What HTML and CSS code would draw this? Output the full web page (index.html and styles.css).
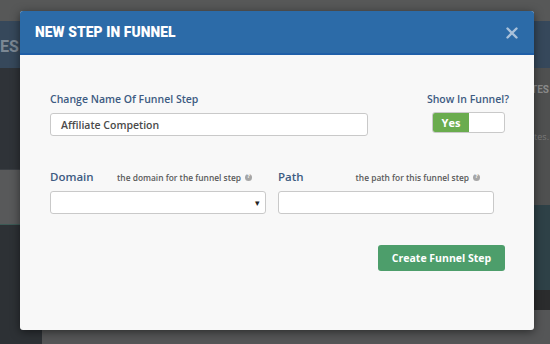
FILE: index.html
```html
<!DOCTYPE html>
<html>
<head>
<meta charset="utf-8">
<link rel="stylesheet" href="styles.css">
</head>
<body>
<div class="backdrop">
  <div class="bd-top"></div>
  <div class="bd-band"><span class="bd-title">ES F</span></div>
  <div class="bd-main">
    <div class="bd-side">
      <div class="bs-a"></div>
      <div class="bs-b"></div>
      <div class="bs-c"></div>
    </div>
    <div class="bd-content">
      <div class="bc-a">
        <span class="bc-head">TES</span>
        <span class="bc-txt">tes.</span>
      </div>
      <div class="bc-b"></div>
      <div class="bc-c"></div>
      <div class="bc-d"><div class="bar bar1"></div><div class="bar bar2"></div></div>
    </div>
  </div>
</div>

<div class="modal">
  <div class="modal-header">
    <h1 class="modal-title">NEW STEP IN FUNNEL</h1>
    <svg class="close" width="12" height="12" viewBox="0 0 12 12"><path d="M1.5 1.5 L10.5 10.5 M10.5 1.5 L1.5 10.5" stroke="#a9c1da" stroke-width="2.4" stroke-linecap="round"/></svg>
  </div>
  <div class="modal-body">
    <div class="row row-name">
      <div class="field name-field">
        <label class="label">Change Name Of Funnel Step</label>
        <div class="input"><span class="input-text">Affiliate Competion</span></div>
      </div>
      <div class="field show-field">
        <label class="label label-show">Show In Funnel?</label>
        <div class="toggle"><span class="toggle-on">Yes</span><span class="toggle-off"></span></div>
      </div>
    </div>
    <div class="row row-url">
      <div class="field url-field">
        <div class="label-row">
          <label class="label label-big">Domain</label>
          <span class="help">the domain for the funnel step <span class="qicon">?</span></span>
        </div>
        <div class="input select"><span class="caret">&#9662;</span></div>
      </div>
      <div class="field url-field">
        <div class="label-row">
          <label class="label label-big">Path</label>
          <span class="help">the path for this funnel step <span class="qicon">?</span></span>
        </div>
        <div class="input"></div>
      </div>
    </div>
    <div class="actions">
      <button class="btn">Create Funnel Step</button>
    </div>
  </div>
</div>
</body>
</html>
```

FILE: styles.css
```css
html, body {
  margin: 0;
  padding: 0;
}
body {
  width: 550px;
  height: 344px;
  overflow: hidden;
  position: relative;
  background: #2e3236;
  font-family: "Open Sans", "Noto Sans", sans-serif;
}

/* backdrop page */
.backdrop {
  width: 550px;
  height: 344px;
  display: flex;
  flex-direction: column;
}
.bd-top {
  height: 21px;
  background: #575858;
}
.bd-band {
  height: 47px;
  background: #36485b;
  display: flex;
  align-items: center;
  font-family: "Roboto", sans-serif;
  font-weight: 700;
  color: #7c8894;
}
.bd-title {
  font-size: 16px;
  margin-top: 3px;
}
.bd-main {
  flex: 1;
  display: flex;
}
.bd-side {
  width: 42px;
  display: flex;
  flex-direction: column;
}
.bs-a {
  height: 102px;
  background: #2f3338;
  border-bottom: 1px solid #3a3e43;
  box-sizing: border-box;
}
.bs-b {
  height: 55px;
  background: #58595a;
  border-bottom: 1px solid #3c5a55;
  box-sizing: border-box;
}
.bs-c {
  flex: 1;
  background: #2d3135;
}
.bd-content {
  flex: 1;
  display: flex;
  flex-direction: column;
}
.bc-a {
  height: 137px;
  background: #4f5050;
  display: flex;
  flex-direction: column;
  align-items: flex-end;
  padding-top: 16px;
  box-sizing: border-box;
  gap: 35px;
}
.bc-head {
  font-family: "Roboto", sans-serif;
  font-weight: 700;
  font-size: 10px;
  color: #8a8a8a;
  margin-right: 1px;
}
.bc-txt {
  color: #7b7b7b;
  font-size: 9px;
  margin-right: 1px;
}
.bc-b {
  height: 85px;
  background: #2e4147;
}
.bc-c {
  height: 20px;
  background: #2b2c2d;
}
.bc-d {
  flex: 1;
  background: #555657;
  display: flex;
  gap: 40px;
  padding-left: 18px;
}
.bar {
  height: 4px;
  background: #2f5560;
}
.bar1 { width: 200px; }
.bar2 { width: 135px; margin-left: 45px; }

/* modal */
.modal {
  position: absolute;
  left: 20px;
  top: 11px;
  width: 514px;
  height: 319px;
  background: #f8f8f8;
  border-radius: 3px;
  box-shadow: 0 2px 10px rgba(0, 0, 0, 0.5);
  overflow: hidden;
  display: flex;
  flex-direction: column;
}
.modal-header {
  height: 44px;
  box-sizing: border-box;
  background: #2c6ba8;
  border-bottom: 2px solid #1f5fa8;
  display: flex;
  align-items: center;
  justify-content: space-between;
  padding: 0 16px 0 15px;
}
.modal-title {
  margin: 0;
  font-family: "Roboto", sans-serif;
  font-weight: 900;
  font-size: 13.8px;
  color: #ffffff;
  letter-spacing: 0.1px;
}
.close {
  display: block;
  margin-top: 1px;
}
.modal-body {
  padding: 37px 29px 0 30px;
  display: flex;
  flex-direction: column;
}
.row {
  display: flex;
  justify-content: space-between;
}
.field {
  display: flex;
  flex-direction: column;
}
.name-field {
  width: 318px;
}
.show-field {
  align-items: flex-end;
}
.label {
  font-size: 10.5px;
  font-weight: 600;
  color: #3d5b82;
  line-height: 14px;
  height: 14px;
  margin-bottom: 7px;
}
.label-show {
  margin-right: -4px;
}
.input {
  height: 23px;
  box-sizing: border-box;
  border: 1px solid #c9c9c9;
  border-radius: 3px;
  background: #ffffff;
  display: flex;
  align-items: center;
  padding: 0 10px;
}
.input-text {
  font-size: 10.5px;
  font-weight: 600;
  color: #4a4a4a;
}
.toggle {
  width: 73px;
  height: 21px;
  box-sizing: border-box;
  border: 1px solid #c9c9c9;
  border-radius: 3px;
  background: #ffffff;
  display: flex;
  overflow: hidden;
  margin-top: -1px;
}
.toggle-on {
  width: 36px;
  background: #6aac4e;
  color: #ffffff;
  font-size: 11px;
  font-weight: 700;
  display: flex;
  align-items: center;
  justify-content: center;
}
.row-url {
  margin-top: 34px;
  gap: 12px;
  justify-content: flex-start;
}
.url-field {
  width: 216px;
}
.label-row {
  display: flex;
  justify-content: space-between;
  align-items: center;
  padding-right: 14px;
  height: 14px;
  margin-bottom: 7px;
}
.label-row .label {
  margin: 0;
}
.label-big {
  font-size: 11.5px;
}
.help {
  font-size: 8.4px;
  font-weight: 600;
  color: #5a5a5a;
  display: flex;
  align-items: center;
  gap: 4px;
}
.qicon {
  width: 7px;
  height: 7px;
  border-radius: 50%;
  background: #a6a6a6;
  color: #ffffff;
  font-size: 5.5px;
  font-weight: 700;
  display: inline-flex;
  align-items: center;
  justify-content: center;
  line-height: 1;
}
.select {
  justify-content: flex-end;
  padding-right: 5px;
}
.caret {
  font-size: 9px;
  color: #222;
}
.actions {
  display: flex;
  justify-content: flex-end;
  margin-top: 31px;
}
.btn {
  width: 127px;
  height: 26px;
  border: none;
  border-radius: 3px;
  background: #4d9e6b;
  color: #ffffff;
  font-family: "Open Sans", sans-serif;
  font-size: 10.5px;
  font-weight: 700;
  padding: 0;
}
```
